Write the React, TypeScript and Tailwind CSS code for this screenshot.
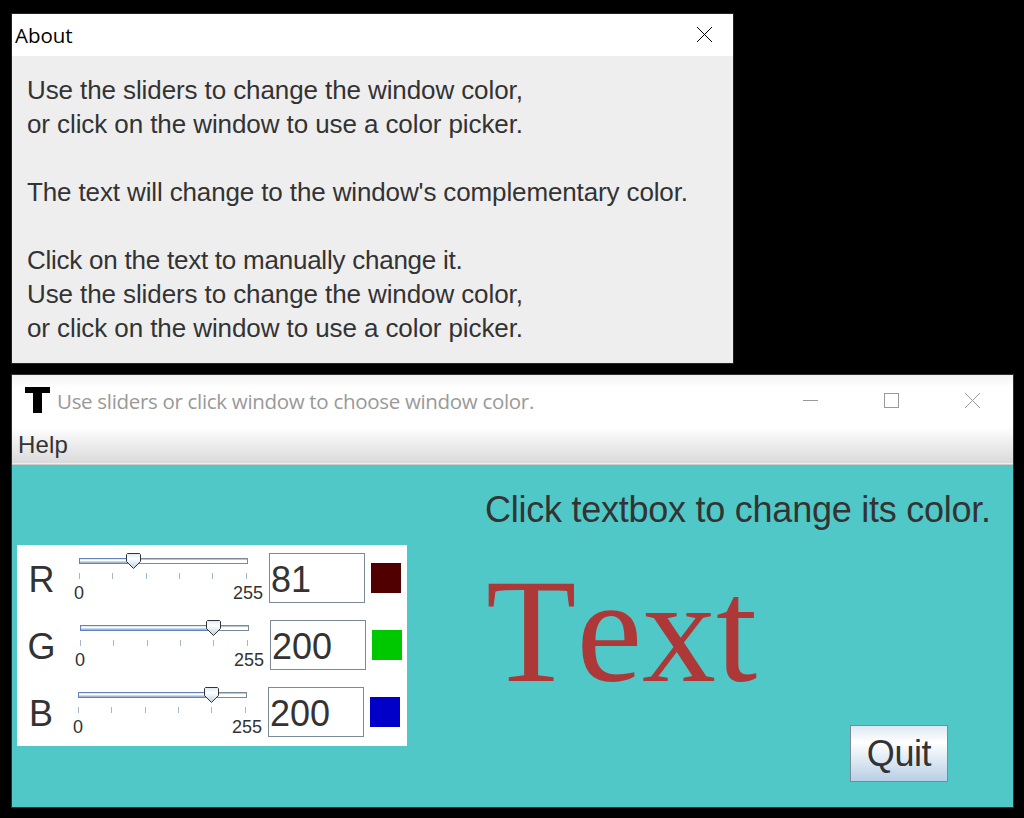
import { useState } from "react";

const aboutLines = [
  { text: "Use the sliders to change the window color,", spacing: "tracking-[-0.1px]" },
  { text: "or click on the window to use a color picker.", spacing: "tracking-[-0.09px]" },
  { text: "", spacing: "" },
  { text: "The text will change to the window's complementary color.", spacing: "tracking-[-0.13px]" },
  { text: "", spacing: "" },
  { text: "Click on the text to manually change it.", spacing: "tracking-[-0.24px]" },
  { text: "Use the sliders to change the window color,", spacing: "tracking-[-0.1px]" },
  { text: "or click on the window to use a color picker.", spacing: "tracking-[-0.09px]" },
];

function CloseIcon({ color }: { color: string }) {
  return (
    <svg width="15" height="15" viewBox="0 0 15 15" shapeRendering="crispEdges" className="block" aria-label="Close">
      <path d="M0 0L15 15M15 0L0 15" stroke={color} strokeWidth="1" fill="none" />
    </svg>
  );
}

function AboutWindow() {
  return (
    <section className="w-[723px] h-[351px] border border-[#222222] bg-[#eeeeee]">
      <header className="flex h-[42px] items-center justify-between bg-white pl-[3px] pr-[21px]">
        <h1 className="pt-px font-['Open_Sans','Noto_Sans',sans-serif] text-[20.5px] leading-[41px] tracking-[-0.05px] text-black">About</h1>
        <div className="pb-[2px]">
          <CloseIcon color="#000000" />
        </div>
      </header>
      <div className="pl-[15px] pt-[17px] text-[26px] leading-[34px] text-[#333333]">
        {aboutLines.map((line, i) => (
          <p key={i} className={`h-[34px] whitespace-nowrap ${line.spacing}`}>{line.text}</p>
        ))}
      </div>
    </section>
  );
}

function Slider({ value, thumb }: { value: number; thumb: number }) {
  return (
    <div className="w-[190px]">
      <svg width="190" height="27" viewBox="0 0 190 27" className="block" role="slider" aria-valuenow={value} aria-valuemin={0} aria-valuemax={255}>
        <defs>
          <linearGradient id="thumbFill" x1="0" y1="0" x2="0" y2="1">
            <stop offset="0" stopColor="#dde8f3" />
            <stop offset="0.35" stopColor="#ffffff" />
            <stop offset="1" stopColor="#b8cfe5" />
          </linearGradient>
        </defs>
        <g shapeRendering="crispEdges">
          <rect x="6.5" y="5.5" width="168" height="5" fill="#ffffff" stroke="#7a8a99" />
          <rect x="7" y="6" width="167" height="1" fill="#b8c5d3" />
          <rect x="6.5" y="5.5" width={thumb - 6} height="5" fill="#dce7f3" stroke="#6382bf" />
          <rect x="7" y="6" width={thumb - 7} height="1" fill="#e3ecf5" />
          <rect x="7" y="7" width={thumb - 7} height="1" fill="#ffffff" />
          <rect x="7" y="8" width={thumb - 7} height="1" fill="#c9daeb" />
          <rect x="7" y="9" width={thumb - 7} height="1" fill="#a3b8cc" />
          {[6, 39, 73, 106, 139, 173].map((x) => (
            <rect key={x} x={x} y="20" width="1" height="6" fill="#a3b8cc" />
          ))}
        </g>
        <path
          transform={`translate(${thumb - 7} 0)`}
          d="M1.5 .5H13.5L14.5 1.5V8.5L7.5 15.5L.5 8.5V1.5Z"
          fill="url(#thumbFill)"
          stroke="#333333"
        />
      </svg>
      <div className="flex justify-between pl-px pt-px text-[18px] leading-[24px] text-[#333333]">
        <span>0</span>
        <span>255</span>
      </div>
    </div>
  );
}

interface ChannelProps {
  name: string;
  value: number;
  thumb: number;
  rowClass: string;
  swatchClass: string;
  nameClass: string;
}

function Channel({ name, value, thumb, rowClass, swatchClass, nameClass }: ChannelProps) {
  const [text, setText] = useState(String(value));
  return (
    <div className={`flex h-[67px] items-start pt-2 text-[#333333] ${rowClass}`}>
      <span className={`w-[45px] pt-[7px] text-[36px] leading-[40px] ${nameClass}`}>{name}</span>
      <Slider value={value} thumb={thumb} />
      <input
        value={text}
        onChange={(e) => setText(e.target.value)}
        className="ml-[6px] h-[50px] w-[96px] border border-[#7a8a99] bg-white pl-px pt-[3px] text-[36px] text-[#333333] outline-none"
      />
      <span className={`ml-[6px] mt-[10px] size-[30px] ${swatchClass}`} />
    </div>
  );
}

function MainWindow() {
  return (
    <section className="mt-[10px] flex h-[434px] w-[1003px] flex-col border border-[#332f30] bg-[#51c8c8]">
      <header className="flex h-[52px] shrink-0 items-center bg-linear-to-b from-[#f4f4f4] from-0% to-white to-25% pl-[13px] pr-[33px]">
        <svg width="25" height="26" viewBox="0 0 25 26" className="mb-[3px] block">
          <path d="M0 0H25V6H17V26H8V6H0Z" fill="#000" shapeRendering="crispEdges" />
        </svg>
        <h2 className="ml-[7px] flex-1 whitespace-nowrap pt-px font-['Open_Sans','Noto_Sans',sans-serif] text-[20.5px] leading-[51px] tracking-[-0.31px] text-[#999999]">
          Use sliders or click window to choose window color.
        </h2>
        <div className="flex items-center gap-[66px] pb-[1px]">
          <span className="h-px w-[15px] bg-[#999999]" />
          <span className="size-[15px] border border-[#999999]" />
          <CloseIcon color="#999999" />
        </div>
      </header>
      <nav className="h-[38px] shrink-0 border-b border-[#cccccc] bg-[#eeeeee]">
        <div className="h-[36px] bg-linear-to-b from-white to-[#dadada] pl-[6px] text-[24px] leading-[36px] tracking-[0.2px] text-[#333333]">
          Help
        </div>
      </nav>
      <main className="flex flex-1 pl-[5px]">
        <div className="mt-[80px] h-[201px] w-[390px] shrink-0 bg-white">
          <Channel name="R" value={81} thumb={60} rowClass="pl-[11px]" nameClass="indent-[0.5px]" swatchClass="bg-[#510000]" />
          <Channel name="G" value={200} thumb={139} rowClass="pl-[12px]" nameClass="-indent-[1.5px]" swatchClass="bg-[#00c800]" />
          <Channel name="B" value={200} thumb={139} rowClass="pl-[10px]" nameClass="pl-[2px]" swatchClass="bg-[#0000c8]" />
        </div>
        <div className="flex flex-1 flex-col pl-[78px] pt-[25px]">
          <p className="whitespace-nowrap text-[36px] leading-[40px] tracking-[-0.25px] text-[#333333]">Click textbox to change its color.</p>
          <p className="mt-[16px] h-[172px] pl-px font-['Liberation_Serif','Times_New_Roman',serif] text-[148px] leading-[170px] text-[#ae3737] [font-kerning:none]">Text</p>
          <button className="ml-[365px] mt-[7px] h-[57px] w-[98px] border border-[#7a8a99] bg-linear-to-b from-[#dde8f3] via-white via-30% to-[#b8cfe5] pt-px text-[36px] leading-[54px] tracking-[-0.4px] text-[#333333]">
            Quit
          </button>
        </div>
      </main>
    </section>
  );
}

export default function App() {
  return (
    <div className="h-[818px] w-[1024px] overflow-hidden bg-black pl-[11px] pt-[13px] font-['Liberation_Sans',Arial,sans-serif]">
      <AboutWindow />
      <MainWindow />
    </div>
  );
}
